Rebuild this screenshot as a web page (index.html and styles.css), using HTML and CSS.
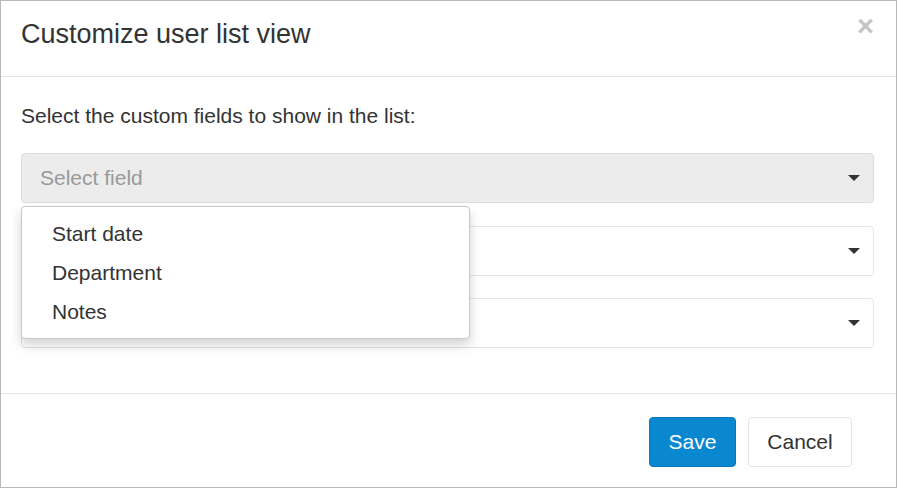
FILE: index.html
```html
<!DOCTYPE html>
<html>
<head>
<meta charset="utf-8">
<link rel="stylesheet" href="styles.css">
</head>
<body>
<div class="modal">
  <div class="modal-header">
    <h4 class="modal-title">Customize user list view</h4>
    <span class="close">&times;</span>
  </div>
  <div class="modal-body">
    <p class="lead">Select the custom fields to show in the list:</p>
    <div class="fields">
      <div class="select-wrap">
        <div class="select open"><span class="placeholder">Select field</span><span class="caret"></span></div>
        <ul class="menu">
          <li>Start date</li>
          <li>Department</li>
          <li>Notes</li>
        </ul>
      </div>
      <div class="select"><span class="placeholder"></span><span class="caret"></span></div>
      <div class="select last"><span class="placeholder"></span><span class="caret"></span></div>
    </div>
  </div>
  <div class="modal-footer">
    <button class="btn btn-primary">Save</button>
    <button class="btn btn-default">Cancel</button>
  </div>
</div>
</body>
</html>
```

FILE: styles.css
```css
* { box-sizing: border-box; }
html, body { margin: 0; padding: 0; background: #fff; }
body { font-family: "Liberation Sans", Arial, sans-serif; color: #333; }

.modal {
  width: 897px;
  height: 488px;
  border: 1px solid #b8b8b8;
  display: flex;
  flex-direction: column;
}

.modal-header {
  height: 76px;
  border-bottom: 1px solid #e5e5e5;
  padding: 0 20px;
  display: flex;
  align-items: flex-start;
  justify-content: space-between;
}
.modal-title {
  margin: 0;
  padding-top: 18px;
  font-size: 27px;
  font-weight: normal;
  line-height: 30px;
  color: #333;
}
.close {
  margin-top: 10px;
  margin-right: 2px;
  font-size: 29px;
  font-weight: bold;
  color: #c4c4c4;
  line-height: 30px;
}

.modal-body {
  padding: 0 22px 0 20px;
  height: 316px;
}
.lead {
  margin: 0;
  padding-top: 27px;
  font-size: 21px;
  line-height: 24px;
  color: #333;
}
.fields {
  margin-top: 25px;
  display: flex;
  flex-direction: column;
  gap: 23px;
}
.select.last { margin-top: -1px; }
.select-wrap { position: relative; }
.select {
  height: 50px;
  border: 1px solid #e5e5e5;
  border-radius: 4px;
  background: #fff;
  display: flex;
  align-items: center;
  justify-content: space-between;
  padding: 0 13px 0 18px;
}
.select.open {
  background: #ececec;
  border-color: #dcdcdc;
}
.placeholder {
  font-size: 21px;
  color: #999;
}
.caret {
  width: 0;
  height: 0;
  border-left: 6px solid transparent;
  border-right: 6px solid transparent;
  border-top: 6px solid #333;
  margin-top: -1px;
}
.menu {
  position: absolute;
  left: 0;
  top: 53px;
  width: 449px;
  margin: 0;
  padding: 7px 0;
  list-style: none;
  background: #fff;
  border: 1px solid #c8c8c8;
  border-radius: 4px;
  box-shadow: 0 6px 12px rgba(0,0,0,0.175);
  z-index: 2;
}
.menu li {
  padding: 0 30px;
  height: 39px;
  line-height: 39px;
  font-size: 21px;
  color: #333;
}

.modal-footer {
  flex: 1;
  border-top: 1px solid #e5e5e5;
  display: flex;
  justify-content: flex-end;
  align-items: flex-start;
  padding: 23px 44px 0 0;
  gap: 12px;
}
.btn {
  height: 50px;
  font-family: "Liberation Sans", Arial, sans-serif;
  font-size: 21px;
  border-radius: 4px;
  padding: 0;
  cursor: pointer;
}
.btn-primary {
  background: #0a88cf;
  border: 1px solid #0a78b8;
  color: #fff;
  width: 87px;
}
.btn-default {
  background: #fff;
  border: 1px solid #e5e5e5;
  color: #333;
  width: 104px;
}
```
